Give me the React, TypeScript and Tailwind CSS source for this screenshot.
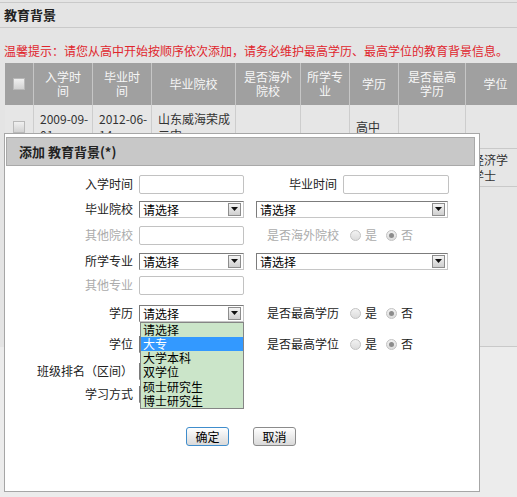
import React from "react";

const COLS = [
  "w-[29px]",
  "w-[59px]",
  "w-[59px]",
  "w-[84px]",
  "w-[65px]",
  "w-[49px]",
  "w-[49px]",
  "w-[67px]",
  "w-[60px]",
];

const HEADERS = ["", "入学时\n间", "毕业时\n间", "毕业院校", "是否海外\n院校", "所学专\n业", "学历", "是否最高\n学历", "学位"];

const ROWS: { h: string; cells: string[] }[] = [
  { h: "h-[44px]", cells: ["#", "2009-09-\n01", "2012-06-\n14", "山东威海荣成\n二中", "", "", "高中", "", ""] },
  { h: "h-[38px]", cells: ["", "", "", "", "", "", "", "", "经济学\n学士"] },
  { h: "h-[160px]", cells: ["", "", "", "", "", "", "", "", ""] },
];

const EDU_OPTIONS = ["请选择", "大专", "大学本科", "双学位", "硕士研究生", "博士研究生"];

function Checkbox() {
  return <span className="block w-[12px] h-[12px] border border-[#b9b9b9] bg-gradient-to-b from-[#f0f0f0] to-[#d2d2d2]" />;
}

function TextInput({ w = "w-[105px]" }: { w?: string }) {
  return <div className={`${w} h-[19px] bg-white border border-[#c2c2c2] rounded-[2px]`} />;
}

// blank = a select that sits under the open list (its text is covered anyway)
function Select({ w = "w-[105px]", blank }: { w?: string; blank?: boolean }) {
  return (
    <div className={`${w} h-[17px] bg-white border border-[#7c7c7c] border-r-[#c6c6c6] border-b-[#c6c6c6] flex items-center justify-between`}>
      <span className="pl-[3px] text-[12px] leading-[15px] text-black">{blank ? "" : "请选择"}</span>
      <span className="mr-[2px] w-[13px] h-[13px] border border-[#8d8d8d] bg-gradient-to-b from-[#f4f4f4] to-[#cfcfcf] flex items-center justify-center">
        <svg width="7" height="4" viewBox="0 0 7 4"><path d="M0 0h7L3.5 4z" fill="#111" /></svg>
      </span>
    </div>
  );
}

function Radio({ checked }: { checked?: boolean }) {
  return (
    <span className="w-[11px] h-[11px] rounded-full border border-[#c2c2c2] bg-gradient-to-b from-[#f2f2f2] to-[#dcdcdc] flex items-center justify-center">
      {checked && <span className="w-[5px] h-[5px] rounded-full bg-[#8c8c8c]" />}
    </span>
  );
}

function RadioGroup({ label, muted }: { label: string; muted?: boolean }) {
  const tone = muted ? "text-[#ababab]" : "text-[#222]";
  return (
    <div className={`ml-[23px] flex items-center text-[12px] ${tone}`}>
      <span className="w-[83px]">{label}</span>
      <Radio />
      <span className="ml-[4px]">是</span>
      <span className="ml-[9px]"><Radio checked /></span>
      <span className="ml-[4px]">否</span>
    </div>
  );
}

function Label({ text, muted }: { text: string; muted?: boolean }) {
  return (
    <span className={`w-[134px] pr-[6px] text-right text-[12px] ${muted ? "text-[#ababab]" : "text-[#222]"}`}>
      {text}
    </span>
  );
}

export default function App() {
  return (
    <div className="relative w-[517px] h-[497px] overflow-hidden bg-[#ececec] font-['Noto_Sans_CJK_SC',sans-serif]">
      <div className="bg-[#e4e4e4]">
        <div className="pt-[2px] border-b border-[#c9c9c9]" />
        <div className="h-[25px] px-[4px] flex items-center border-b border-[#c9c9c9] text-[13px] font-bold text-[#222]">
          教育背景
        </div>
        <p className="pt-[15px] pb-[4px] px-[4px] text-[12px] leading-[16px] text-[#e0262d] whitespace-nowrap">
          温馨提示：请您从高中开始按顺序依次添加，请务必维护最高学历、最高学位的教育背景信息。
        </p>

        {/* table behind the dialog */}
        <div className="ml-[5px] w-[521px]">
          <div className="flex h-[42px] bg-[#a0a0a0]">
            {HEADERS.map((h, i) => (
              <div key={i} className={`${COLS[i]} shrink-0 border-r border-[#c6c6c6] flex items-center justify-center text-center whitespace-pre-line text-[12px] leading-[14px] text-[#f7f7f7]`}>
                {i === 0 ? <Checkbox /> : h}
              </div>
            ))}
          </div>
          {ROWS.map((r, ri) => (
            <div key={ri} className={`flex ${r.h} bg-[#e6e6e6] border-b border-[#c9c9c9]`}>
              {r.cells.map((c, i) => (
                <div key={i} className={`${COLS[i]} shrink-0 border-r border-[#cdcdcd] flex items-center ${i === 0 ? "justify-center" : "pl-[6px]"} whitespace-pre-line text-[12px] leading-[16px] text-[#333]`}>
                  {c === "#" ? <Checkbox /> : c}
                </div>
              ))}
            </div>
          ))}
        </div>
      </div>

      {/* dialog */}
      <div className="absolute left-[4px] top-[133px] w-[476px] h-[359px] bg-white border border-[#a6a6a6]">
        <div className="mt-[3px] ml-[1px] mr-[4px] h-[29px] bg-[#c8c8c8] border border-[#a9a9a9] flex items-center pl-[12px] text-[13px] font-bold text-[#222]">
          添加 教育背景(*)
        </div>

        <div className="pt-[5px]">
          <div className="h-[26px] flex items-center">
            <Label text="入学时间" />
            <TextInput />
            <span className="w-[99px] pr-[6px] text-right text-[12px] text-[#222]">毕业时间</span>
            <TextInput w="w-[106px]" />
          </div>
          <div className="h-[24px] flex items-center">
            <Label text="毕业院校" />
            <Select />
            <div className="ml-[12px]"><Select w="w-[192px]" /></div>
          </div>
          <div className="h-[28px] flex items-center">
            <Label text="其他院校" muted />
            <TextInput />
            <RadioGroup label="是否海外院校" muted />
          </div>
          <div className="h-[24px] flex items-center">
            <Label text="所学专业" />
            <Select />
            <div className="ml-[12px]"><Select w="w-[192px]" /></div>
          </div>
          <div className="h-[24px] flex items-center">
            <Label text="其他专业" muted />
            <TextInput />
          </div>
          <div className="h-[32px] flex items-center">
            <Label text="学历" />
            <div className="relative z-10">
              <Select />
              <ul className="absolute left-[1px] top-[17px] w-[104px] bg-[#cbe5c9] border border-[#858585] text-[12px] leading-[14.3px] text-black">
                {EDU_OPTIONS.map((o, i) => (
                  <li key={o} className={`pl-[2px] ${i === 1 ? "bg-[#3399ff] text-white" : ""}`}>{o}</li>
                ))}
              </ul>
            </div>
            <RadioGroup label="是否最高学历" />
          </div>
          <div className="h-[30px] flex items-center">
            <Label text="学位" />
            <Select blank />
            <RadioGroup label="是否最高学位" />
          </div>
          <div className="h-[24px] flex items-center">
            <Label text="班级排名（区间）" />
            <Select blank />
          </div>
          <div className="h-[22px] flex items-center">
            <Label text="学习方式" />
            <Select blank />
          </div>

          <div className="mt-[22px] pl-[181px] flex gap-[24px]">
            <button className="w-[43px] h-[19px] border border-[#3f8dcc] rounded-[3px] bg-gradient-to-b from-white to-[#d9d9d9] text-[12px] leading-[15px] text-black">
              确定
            </button>
            <button className="w-[43px] h-[19px] border border-[#8b8b8b] rounded-[3px] bg-gradient-to-b from-white to-[#d9d9d9] text-[12px] leading-[15px] text-black">
              取消
            </button>
          </div>
        </div>
      </div>
    </div>
  );
}
